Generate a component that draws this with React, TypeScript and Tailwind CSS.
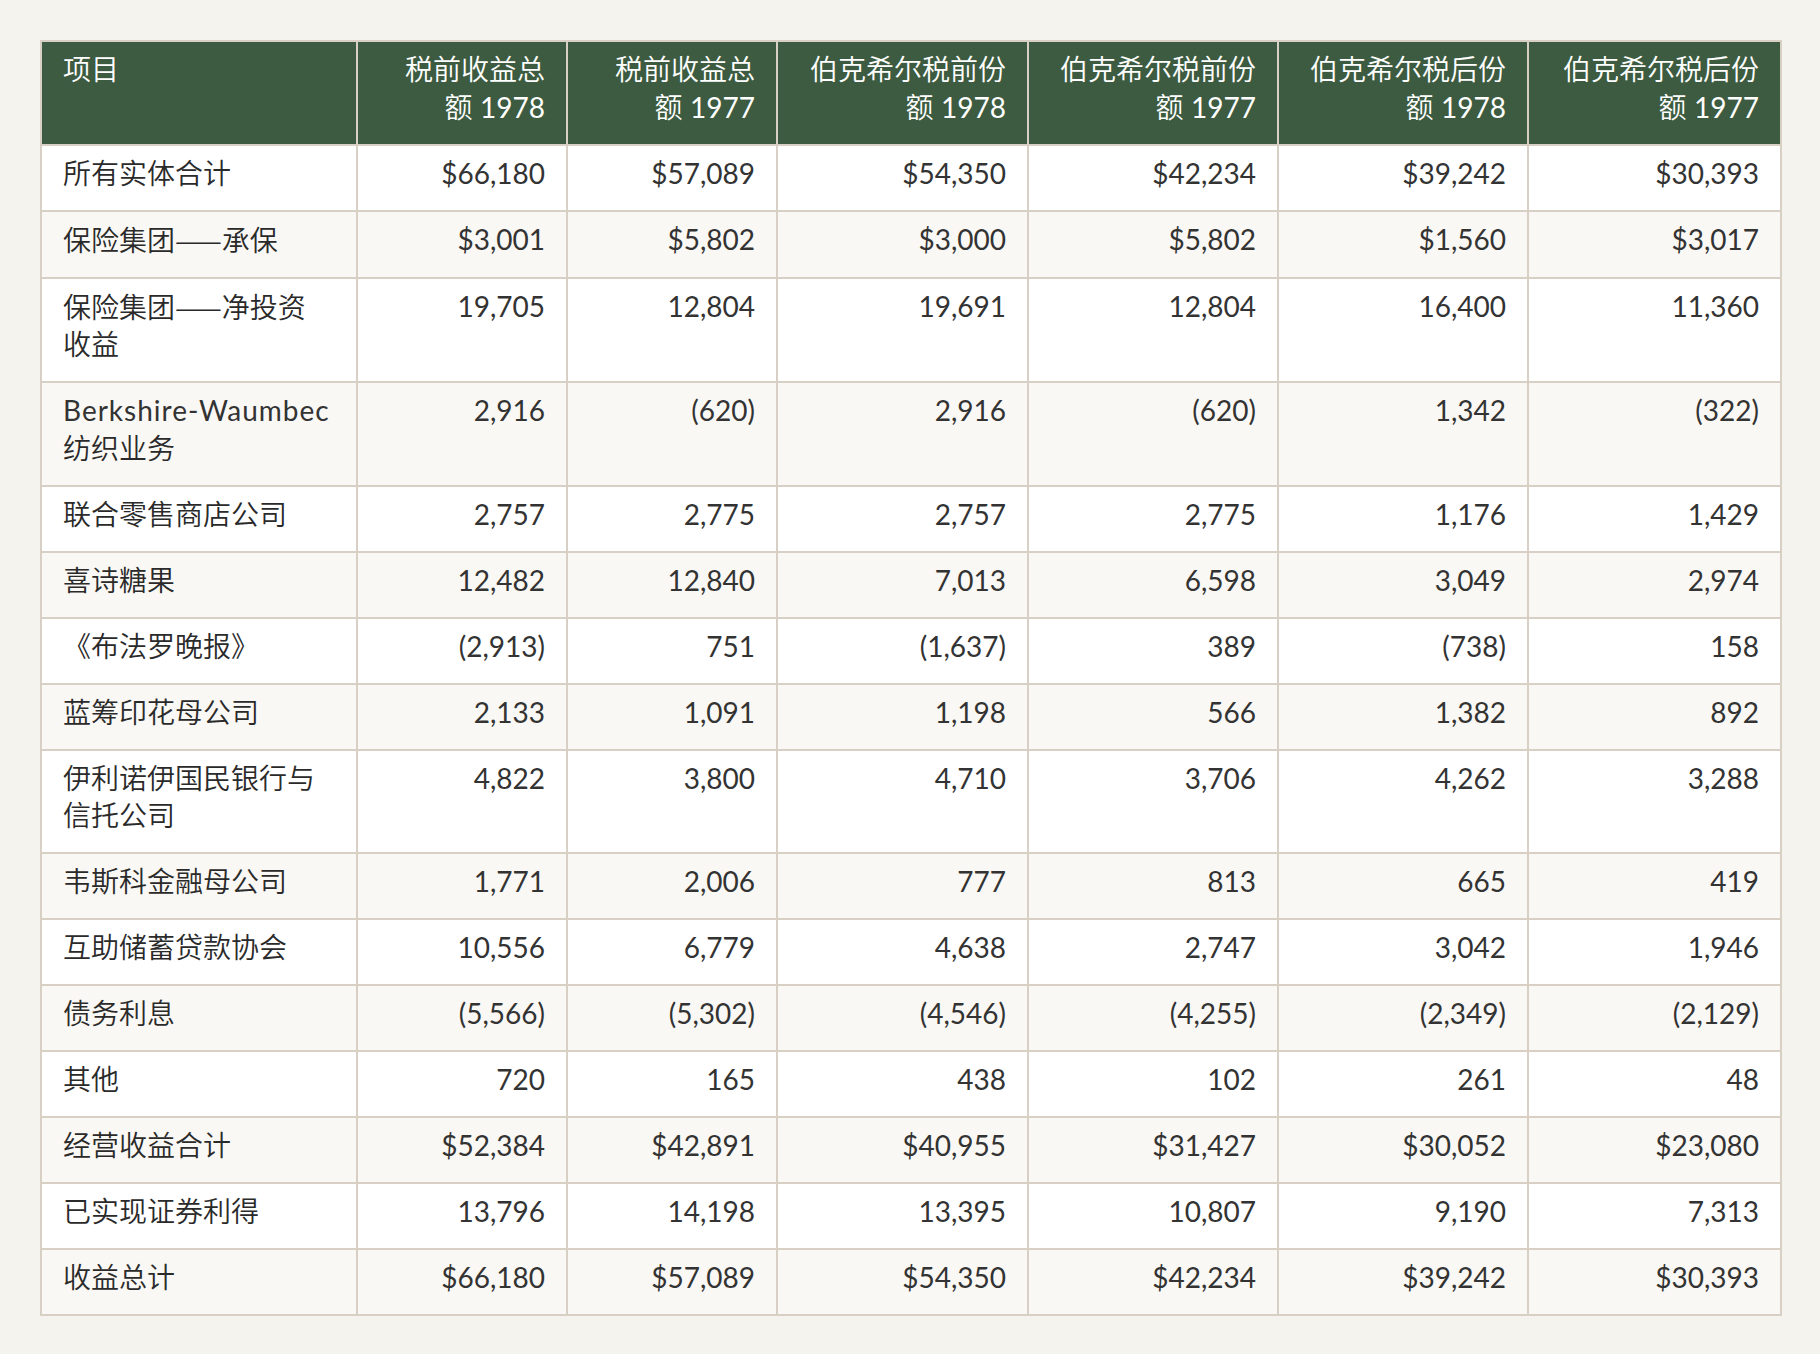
import React from "react";

const Dash = () => <span className="font-['Noto_Sans_CJK_SC',sans-serif]">——</span>;

const headers: React.ReactNode[] = [
  "项目",
  <>税前收益总<br />额 <span className="font-normal">1978</span></>,
  <>税前收益总<br />额 <span className="font-normal">1977</span></>,
  <>伯克希尔税前份<br />额 <span className="font-normal">1978</span></>,
  <>伯克希尔税前份<br />额 <span className="font-normal">1977</span></>,
  <>伯克希尔税后份<br />额 <span className="font-normal">1978</span></>,
  <>伯克希尔税后份<br />额 <span className="font-normal">1977</span></>,
];

const widths = ["w-[316px]", "w-[210px]", "w-[210px]", "w-[251px]", "w-[250px]", "w-[250px]", "w-[253px]"];

const rows: [React.ReactNode, string[]][] = [
  ["所有实体合计", ["$66,180", "$57,089", "$54,350", "$42,234", "$39,242", "$30,393"]],
  [<>保险集团<Dash />承保</>, ["$3,001", "$5,802", "$3,000", "$5,802", "$1,560", "$3,017"]],
  [<>保险集团<Dash />净投资<br />收益</>, ["19,705", "12,804", "19,691", "12,804", "16,400", "11,360"]],
  [<><span className="font-normal tracking-[1px] text-[#333333]">Berkshire-Waumbec</span><br />纺织业务</>, ["2,916", "(620)", "2,916", "(620)", "1,342", "(322)"]],
  ["联合零售商店公司", ["2,757", "2,775", "2,757", "2,775", "1,176", "1,429"]],
  ["喜诗糖果", ["12,482", "12,840", "7,013", "6,598", "3,049", "2,974"]],
  ["《布法罗晚报》", ["(2,913)", "751", "(1,637)", "389", "(738)", "158"]],
  ["蓝筹印花母公司", ["2,133", "1,091", "1,198", "566", "1,382", "892"]],
  [<>伊利诺伊国民银行与<br />信托公司</>, ["4,822", "3,800", "4,710", "3,706", "4,262", "3,288"]],
  ["韦斯科金融母公司", ["1,771", "2,006", "777", "813", "665", "419"]],
  ["互助储蓄贷款协会", ["10,556", "6,779", "4,638", "2,747", "3,042", "1,946"]],
  ["债务利息", ["(5,566)", "(5,302)", "(4,546)", "(4,255)", "(2,349)", "(2,129)"]],
  ["其他", ["720", "165", "438", "102", "261", "48"]],
  ["经营收益合计", ["$52,384", "$42,891", "$40,955", "$31,427", "$30,052", "$23,080"]],
  ["已实现证券利得", ["13,796", "14,198", "13,395", "10,807", "9,190", "7,313"]],
  ["收益总计", ["$66,180", "$57,089", "$54,350", "$42,234", "$39,242", "$30,393"]],
];

const cell = "border-2 border-[#d8d0c4] px-[21px] pt-[9px] pb-[17.5px] align-top";

export default function App() {
  return (
    <div className="min-h-[1354px] w-[1820px] bg-[#f5f3ee] p-[40px] font-['Lato','Noto_Sans_CJK_SC',sans-serif] font-[350]">
      <table className="w-[1740px] table-fixed border-collapse border-2 border-[#d8d0c4] text-[28px] leading-[37.5px] text-[#2a2a2a]">
        <colgroup>
          {widths.map((w, i) => (
            <col key={i} className={w} />
          ))}
        </colgroup>
        <thead>
          <tr className="bg-[#3c5b40] text-white">
            {headers.map((h, i) => (
              <th
                key={i}
                className={`${cell} font-[350] ${i === 0 ? "text-left" : "text-right"}`}
              >
                {h}
              </th>
            ))}
          </tr>
        </thead>
        <tbody>
          {rows.map(([label, vals], r) => (
            <tr key={r} className={r % 2 === 0 ? "bg-white" : "bg-[#faf8f4]"}>
              <td className={`${cell} text-left`}>{label}</td>
              {vals.map((v, c) => (
                <td key={c} className={`${cell} text-right font-normal text-[#333333]`}>
                  {v}
                </td>
              ))}
            </tr>
          ))}
        </tbody>
      </table>
    </div>
  );
}
